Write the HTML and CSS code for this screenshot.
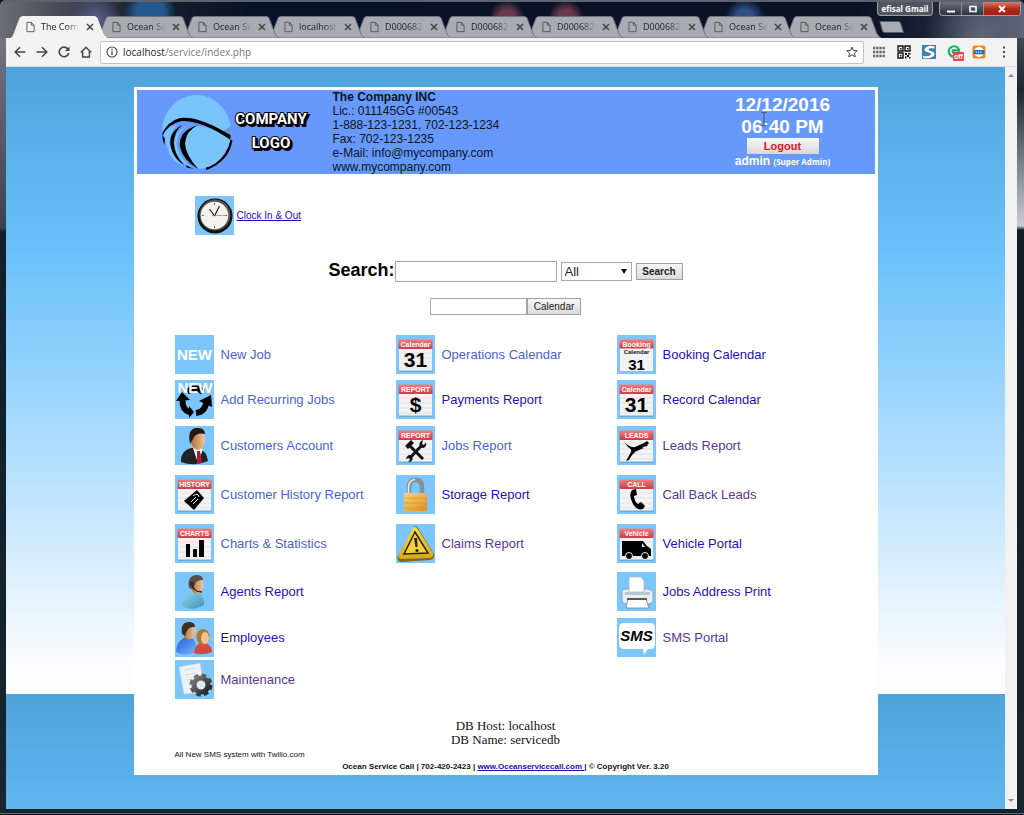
FILE: index.html
```html
<!DOCTYPE html>
<html lang="en">
<head>
<meta charset="utf-8">
<title>The Company</title>
<link rel="stylesheet" href="styles.css">
</head>
<body>
<svg class="defs" aria-hidden="true">
  <defs>
    <linearGradient id="red" x1="0" y1="0" x2="0" y2="1"><stop offset="0" stop-color="#f08080"/><stop offset="1" stop-color="#cf3a40"/></linearGradient>
    <linearGradient id="gold" x1="0" y1="0" x2="1" y2="1"><stop offset="0" stop-color="#ffd873"/><stop offset="1" stop-color="#e08a1c"/></linearGradient>
    <linearGradient id="yellow" x1="0" y1="0" x2="0" y2="1"><stop offset="0" stop-color="#f6dc4a"/><stop offset="1" stop-color="#dba812"/></linearGradient>
    <linearGradient id="skin" x1="0" y1="0" x2="1" y2="0"><stop offset="0" stop-color="#b06a35"/><stop offset="1" stop-color="#f2c79b"/></linearGradient>
    <linearGradient id="teal" x1="0" y1="0" x2="1" y2="1"><stop offset="0" stop-color="#8fd6e6"/><stop offset="1" stop-color="#3f93b8"/></linearGradient>
    <linearGradient id="blue" x1="0" y1="0" x2="1" y2="1"><stop offset="0" stop-color="#1e5fd0"/><stop offset="1" stop-color="#79b4ff"/></linearGradient>
    <linearGradient id="steel" x1="0" y1="0" x2="1" y2="1"><stop offset="0" stop-color="#7b7b7b"/><stop offset="1" stop-color="#222"/></linearGradient>
    <symbol id="tab-edge" viewBox="0 0 96 22"><path d="M0 22 Q2 21 3 18 L9 2 Q10 .5 12 .5 H83 Q85 .5 86 2 L92 18 Q94 21 96 22Z"/></symbol>
    <symbol id="doc" viewBox="0 0 10 12"><path d="M1 .8H6L9 4V11.2H1ZM6 .8V4H9" fill="none" stroke="#555" stroke-width="1"/></symbol>
    <symbol id="x" viewBox="0 0 8 8"><path d="M1 1L7 7M7 1L1 7" stroke="#444" stroke-width="1.500"/></symbol>
    <symbol id="sheet" viewBox="0 0 39 39"><path d="M3 36H36.500" stroke="#5a8fb5"/><rect x="3" y="10" width="33" height="25.500" fill="#f3f3f3"/><path d="M3 18H36M3 23H36M3 28H36M3 33H36" stroke="#e2e2e2"/><rect x="2.500" y="4.500" width="34" height="9.500" rx="1" fill="url(#red)"/></symbol>
  </defs>
</svg>
<div class="window">
  <header class="titlebar">
    <div class="tabs">
      <div class="tab tab-active"><svg class="shape"><use href="#tab-edge"/></svg><svg class="doc"><use href="#doc"/></svg><span>The Com</span><button aria-label="Close tab"><svg><use href="#x"/></svg></button></div>
      <div class="tab"><svg class="shape"><use href="#tab-edge"/></svg><svg class="doc"><use href="#doc"/></svg><span>Ocean Se</span><button aria-label="Close tab"><svg><use href="#x"/></svg></button></div>
      <div class="tab"><svg class="shape"><use href="#tab-edge"/></svg><svg class="doc"><use href="#doc"/></svg><span>Ocean Se</span><button aria-label="Close tab"><svg><use href="#x"/></svg></button></div>
      <div class="tab"><svg class="shape"><use href="#tab-edge"/></svg><svg class="doc"><use href="#doc"/></svg><span>localhost</span><button aria-label="Close tab"><svg><use href="#x"/></svg></button></div>
      <div class="tab"><svg class="shape"><use href="#tab-edge"/></svg><svg class="doc"><use href="#doc"/></svg><span>D000682</span><button aria-label="Close tab"><svg><use href="#x"/></svg></button></div>
      <div class="tab"><svg class="shape"><use href="#tab-edge"/></svg><svg class="doc"><use href="#doc"/></svg><span>D000682</span><button aria-label="Close tab"><svg><use href="#x"/></svg></button></div>
      <div class="tab"><svg class="shape"><use href="#tab-edge"/></svg><svg class="doc"><use href="#doc"/></svg><span>D000682</span><button aria-label="Close tab"><svg><use href="#x"/></svg></button></div>
      <div class="tab"><svg class="shape"><use href="#tab-edge"/></svg><svg class="doc"><use href="#doc"/></svg><span>D000682</span><button aria-label="Close tab"><svg><use href="#x"/></svg></button></div>
      <div class="tab"><svg class="shape"><use href="#tab-edge"/></svg><svg class="doc"><use href="#doc"/></svg><span>Ocean Se</span><button aria-label="Close tab"><svg><use href="#x"/></svg></button></div>
      <div class="tab"><svg class="shape"><use href="#tab-edge"/></svg><svg class="doc"><use href="#doc"/></svg><span>Ocean Se</span><button aria-label="Close tab"><svg><use href="#x"/></svg></button></div>
      <button class="new-tab" aria-label="New tab"><svg viewBox="0 0 25 12"><path d="M1 .5H19Q21 .5 21.500 2L24.500 11.500H6Q4 11.500 3.500 10Z" fill="#a9acb2" stroke="#555d6a"/></svg></button>
    </div>
    <div class="controls">
      <button class="user">efisal Gmail</button>
      <div class="winbtns">
        <button aria-label="Minimize"><svg viewBox="0 0 12 10"><path d="M2 6.500H10V8.500H2Z" fill="#fff"/></svg></button>
        <button aria-label="Maximize"><svg viewBox="0 0 12 10"><path d="M3 2.500H9V7.500H3Z" fill="none" stroke="#fff" stroke-width="1.600"/></svg></button>
        <button class="close" aria-label="Close"><svg viewBox="0 0 12 10"><path d="M3 2L9 8M9 2L3 8" stroke="#fff" stroke-width="2"/></svg></button>
      </div>
    </div>
  </header>

  <nav class="toolbar" aria-label="Browser">
    <button aria-label="Back"><svg viewBox="0 0 12 12"><path d="M11.500 6H1.500M6 1.200L1.200 6L6 10.800" fill="none" stroke="#444" stroke-width="1.500"/></svg></button>
    <button aria-label="Forward"><svg viewBox="0 0 12 12"><path d="M.5 6H10.500M6 1.200L10.800 6L6 10.800" fill="none" stroke="#444" stroke-width="1.500"/></svg></button>
    <button aria-label="Reload"><svg viewBox="0 0 12 12"><path d="M10 3.200A4.800 4.800 0 1 0 10.700 7" fill="none" stroke="#444" stroke-width="1.600"/><path d="M11.500 .6V5H7Z" fill="#444"/></svg></button>
    <button aria-label="Home"><svg viewBox="0 0 12 12"><path d="M.8 6.500L6 1.200L11.200 6.500M2.600 5.500V11H9.400V5.500" fill="none" stroke="#444" stroke-width="1.400"/></svg></button>
    <div class="omnibox">
      <svg viewBox="0 0 12 12"><circle cx="6" cy="6" r="5" fill="none" stroke="#444" stroke-width="1.100"/><path d="M6 5.200V9M6 2.800V4.200" stroke="#444" stroke-width="1.300"/></svg>
      <span class="url"><b>localhost</b>/service/index.php</span>
      <button aria-label="Bookmark"><svg viewBox="0 0 12 12"><path d="M6 1L7.400 4.500L11.200 4.700L8.300 7.200L9.300 10.900L6 8.800L2.700 10.900L3.700 7.200L.8 4.700L4.600 4.500Z" fill="none" stroke="#444"/></svg></button>
    </div>
    <div class="extensions">
      <button aria-label="Apps"><svg viewBox="0 0 14 14"><path d="M1 3H13M1 7H13M1 11H13" stroke="#666" stroke-width="2.400" stroke-dasharray="2.300 .9"/></svg></button>
      <button aria-label="QR code"><svg viewBox="0 0 14 14"><path d="M1 1H6V6H1ZM8 1H13V6H8ZM1 8H6V13H1Z" fill="none" stroke="#111" stroke-width="1.400"/><path d="M3 3H4.500V4.500H3ZM10 3H11.500V4.500H10ZM3 10H4.500V11.500H3ZM8 8H10V10H8ZM11 8H13.500V9.500H11ZM10 10H12V12H10ZM8 11.500H9.500V13.500H8ZM12 12H13.500V13.500H12Z" fill="#111"/></svg></button>
      <button aria-label="S extension"><svg viewBox="0 0 14 14"><rect width="14" height="14" fill="#3d84ad"/><path d="M12.500 1.500C7 0 2.500 2 2.500 5C2.500 7.500 9 7 9 9C9 11 4 11.500 1 11V13C7 14 12.500 12 12.500 9C12.500 6 6.500 6.200 6.500 4.500C6.500 3 9.500 3 12.500 3.500Z" fill="#fff"/></svg></button>
      <button class="badged" aria-label="Grammar"><svg viewBox="0 0 14 14"><circle cx="7" cy="6.500" r="6.300" fill="#1fb068"/><path d="M9.500 4.200A3.300 3.300 0 1 0 10.200 7.200H7.500" fill="none" stroke="#fff" stroke-width="1.500"/></svg><span>off</span></button>
      <button aria-label="Ring"><svg viewBox="0 0 14 14"><rect x=".5" y=".5" width="13" height="13" rx="2.500" fill="#f08a1d"/><circle cx="7" cy="7" r="5" fill="#fff"/><rect x="1.500" y="5" width="11" height="4.200" rx="1.500" fill="#1d6cb5"/><path d="M3.500 7.200H10.500" stroke="#cfe5f7" stroke-width="1.200" stroke-dasharray="1.500 .8"/></svg></button>
      <button aria-label="Menu"><svg viewBox="0 0 14 14"><path d="M6 1.500H8V3.500H6ZM6 6H8V8H6ZM6 10.500H8V12.500H6Z" fill="#444"/></svg></button>
    </div>
  </nav>

  <div class="viewport">
    <div class="page">
      <main class="card">
        <section class="banner">
          <svg class="logo" viewBox="0 0 152 80" role="img" aria-label="Company logo">
            <defs><clipPath id="disc"><ellipse cx="36.500" cy="40" rx="34.500" ry="37"/></clipPath></defs>
            <path d="M71 48Q68 68 46 76.500" fill="none" stroke="#000" stroke-width="3"/>
            <g clip-path="url(#disc)">
              <rect width="76" height="80" fill="#79c5fb"/>
              <path d="M0 42Q10 27 28 29Q48 30 72 44V80H0Z" fill="#6699fb"/>
              <path d="M36 34Q52 34 72 49V80H42Q24 62 25 50Q26 38 36 34Z" fill="#79c5fb"/>
              <path d="M4 41Q9 34 17 33Q8 43 11 56Q15 69 28 77Q8 72 4 41Z" fill="#79c5fb"/>
              <path d="M28 34Q15 41 17 55Q20 67 34 77H31Q15 66 14 52Q14 38 28 34Z" fill="#79c5fb"/>
              <path d="M22 33Q7 41 11 56Q14 67 24 73Q14 62 14 51Q14 40 22 33Z" fill="#000"/>
              <path d="M38 33Q18 39 20 55Q23 68 38 77Q25 62 25 51Q26 39 38 33Z" fill="#000"/>
              <path d="M26 73L34 77H27ZM2 43Q1 49 4 55L5 47Z" fill="#000"/>
              <path d="M2 42Q8 29 20 26Q38 23 72 44V49Q44 29 22 29Q9 31 2 44Z" fill="#000"/>
              <path d="M62 40L71 34V44Z" fill="#000" opacity=".2"/>
            </g>
            <g class="logo-shadow"><text x="113" y="34">COMPANY</text><text x="113" y="58">LOGO</text></g>
            <g class="logo-type"><text x="111" y="32">COMPANY</text><text x="111" y="56">LOGO</text></g>
          </svg>
          <address><b>The Company INC</b><br>Lic.: 011145GG #00543<br>1-888-123-1231, 702-123-1234<br>Fax: 702-123-1235<br>e-Mail: info@mycompany.com<br>www.mycompany.com</address>
          <div class="session">
            <div class="stamp">12/12/2016<br>06:40 PM</div>
            <svg class="cursor" viewBox="0 0 6 14"><path d="M.5 .5H2.500L3 1L3.500 .5H5.500M3 1V13M.5 13.500H2.500L3 13L3.500 13.500H5.500" fill="none" stroke="#456"/></svg>
            <button class="logout">Logout</button>
            <div class="who">admin <small>(Super Admin)</small></div>
          </div>
        </section>

        <div class="clock">
          <svg viewBox="0 0 39 39"><rect width="39" height="39" fill="#7cc6fb"/><circle cx="20" cy="20" r="17.500" fill="#111"/><circle cx="20" cy="19" r="15.500" fill="#555"/><circle cx="19.500" cy="19.500" r="13.800" fill="#f4f2ef"/><path d="M19.500 7V9M19.500 30V32M7 19.500H9M30 19.500H32" stroke="#666"/><path d="M19.500 20L14.500 13M19.500 20L24.500 10" stroke="#222" stroke-width="1.200"/><path d="M17 19.500H31" stroke="#c55" stroke-width=".6"/></svg>
          <a href="#">Clock In &amp; Out</a>
        </div>

        <form class="search">
          <label for="q">Search:</label><input id="q" type="text"><select aria-label="Search in"><option>All</option></select><button type="button">Search</button>
        </form>
        <form class="datepick">
          <input type="text" aria-label="Date"><button type="button">Calendar</button>
        </form>

        <nav class="menu" aria-label="Main">
          <ul>
            <li><a class="hot" href="#"><svg viewBox="0 0 39 39"><rect width="39" height="39" fill="#7cc6fb"/><text class="ic-new" x="19.500" y="25">NEW</text></svg>New Job</a></li>
            <li><a class="hot" href="#"><svg viewBox="0 0 39 39"><rect width="39" height="39" fill="#7cc6fb"/><path d="M7.500 20Q7 30 15 32.500M21 33Q31 32 31.500 20M12 12Q20 5 28 12" fill="none" stroke="#000" stroke-width="6"/><path d="M1 21L7 12L15 20ZM14 26L19 32L14 38ZM24 21L37 27L36 15Z"/><text class="ic-new" x="20" y="13">NEW</text></svg>Add Recurring Jobs</a></li>
            <li><a class="hot" href="#"><svg viewBox="0 0 39 39"><rect width="39" height="39" fill="#7cc6fb"/><path d="M6 36Q5 25 16 22H23Q32 25 33 35Q20 41 6 36Z" fill="#202226"/><path d="M18 22L23 37L28 23Z" fill="#fff"/><path d="M22 25L25 25L27 36L24 38L22 36Z" fill="#b3172b"/><ellipse cx="23" cy="14" rx="7" ry="10" fill="url(#skin)"/><path d="M15 18Q12 3 21 2Q30 1 30 8Q22 6 19 11Z" fill="#241812"/></svg>Customers Account</a></li>
            <li><a class="hot" href="#"><svg viewBox="0 0 39 39"><rect width="39" height="39" fill="#7cc6fb"/><use href="#sheet"/><text class="ic-cap" x="19.500" y="12">HISTORY</text><path d="M9 26L22 15L29 23L19 35Z"/><path d="M16 27L21 22M18 29L23 24M18 21Q23 17 24 22" stroke="#eee" fill="none"/></svg>Customer History Report</a></li>
            <li><a class="hot" href="#"><svg viewBox="0 0 39 39"><rect width="39" height="39" fill="#7cc6fb"/><use href="#sheet"/><text class="ic-cap" x="19.500" y="12">CHARTS</text><path d="M11 20H15V33H11ZM18 25H22V33H18ZM24 16H29V33H24Z"/></svg>Charts &amp; Statistics</a></li>
            <li><a class="cool" href="#"><svg viewBox="0 0 39 39"><rect width="39" height="39" fill="#7cc6fb"/><path d="M7 34Q6 25 16 21H23Q30 25 29 33Q17 40 7 34Z" fill="url(#teal)"/><ellipse cx="22" cy="13" rx="6.500" ry="9" fill="url(#skin)"/><path d="M14 16Q12 4 21 3Q28 3 28 8Q20 7 18 17Z" fill="#56514c"/><path d="M17 12Q18 20 27 20" fill="none" stroke="#222" stroke-width="1.500"/><circle cx="17" cy="12" r="2.500" fill="#333"/></svg>Agents Report</a></li>
            <li><a class="cool" href="#"><svg viewBox="0 0 39 39"><rect width="39" height="39" fill="#7cc6fb"/><path d="M1 34Q1 24 10 19H16Q22 24 22 34Q10 39 1 34Z" fill="url(#blue)"/><ellipse cx="14" cy="13" rx="6.500" ry="8.500" fill="url(#skin)"/><path d="M7 16Q5 4 14 4Q20 4 20 9Q12 8 10 18Z" fill="#3f3025"/><path d="M19 35Q20 27 25 25H31Q37 28 37 34Q28 38 19 35Z" fill="#d94545"/><ellipse cx="28" cy="19" rx="6.500" ry="8" fill="#b5772f"/><ellipse cx="30" cy="20" rx="4" ry="6" fill="#f0c391"/></svg>Employees</a></li>
            <li><a class="seen" href="#"><svg viewBox="0 0 39 39"><rect width="39" height="39" fill="#7cc6fb"/><path d="M4 7L25 3L30 32L9 34Z" fill="#eef3f8" stroke="#c5d3de" stroke-width=".6"/><path d="M9 10L20 8M10 15L21 13M11 20L18 19" stroke="#cbd5dd"/><circle cx="26" cy="25" r="9.500" fill="none" stroke="url(#steel)" stroke-width="4" stroke-dasharray="4.500 3"/><circle cx="26" cy="25" r="7" fill="#dfe9f2" stroke="url(#steel)" stroke-width="5"/></svg>Maintenance</a></li>
          </ul>
          <ul>
            <li><a class="hot" href="#"><svg viewBox="0 0 39 39"><rect width="39" height="39" fill="#7cc6fb"/><use href="#sheet"/><text class="ic-cap" x="19.500" y="11.500">Calendar</text><text class="ic-day" x="19.500" y="32">31</text></svg>Operations Calendar</a></li>
            <li><a class="cool" href="#"><svg viewBox="0 0 39 39"><rect width="39" height="39" fill="#7cc6fb"/><use href="#sheet"/><text class="ic-cap" x="19.500" y="12">REPORT</text><text class="ic-day" x="19.500" y="32">$</text></svg>Payments Report</a></li>
            <li><a class="hot" href="#"><svg viewBox="0 0 39 39"><rect width="39" height="39" fill="#7cc6fb"/><use href="#sheet"/><text class="ic-cap" x="19.500" y="12">REPORT</text><path d="M14 20L27 33M26 19L14 32" stroke="#111" stroke-width="3"/><path d="M9 20L15 14L18 17L12 23ZM24 20Q22 16 27 14L26 18L28 19L30 16Q31 22 26 22ZM16 30Q12 27 10 33L13 32L14 34L12 36Q18 36 16 30Z" fill="#111"/></svg>Jobs Report</a></li>
            <li><a class="cool" href="#"><svg viewBox="0 0 39 39"><rect width="39" height="39" fill="#7cc6fb"/><path d="M13 20V12Q13 5 19.500 5Q26 5 26 12V20" fill="none" stroke="#8a8f94" stroke-width="4.500"/><path d="M12.500 19V12Q13 5 19 4.500" fill="none" stroke="#e6eaec" stroke-width="1.500"/><rect x="8" y="18" width="23" height="18" rx="2" fill="url(#gold)"/><path d="M8 23H31M8 28H31M8 33H31" stroke="#d99331" stroke-width=".8"/></svg>Storage Report</a></li>
            <li><a class="seen" href="#"><svg viewBox="0 0 39 39"><rect width="39" height="39" fill="#7cc6fb"/><path d="M18 3Q20 1 22 4L38 30Q39 35 34 36L5 38Q0 37 2 32Z" fill="#7d6a20"/><path d="M17 4Q19 2 21 4L37 29Q38 33 34 34L5 35Q1 34 3 30Z" fill="url(#yellow)"/><path d="M19 8L32 29L8 30Z" fill="#f7cf3a" stroke="#222" stroke-width="1.500"/><path d="M18 14H21L21.500 23H19.500Z" fill="#222"/><circle cx="21" cy="26.500" r="1.500" fill="#222"/></svg>Claims Report</a></li>
          </ul>
          <ul>
            <li><a class="cool" href="#"><svg viewBox="0 0 39 39"><rect width="39" height="39" fill="#7cc6fb"/><rect x="3" y="10" width="33" height="26" fill="#f3f3f3"/><rect x="2.500" y="4.500" width="34" height="9" rx="1" fill="url(#red)"/><text class="ic-cap" x="19.500" y="11.500">Booking</text><text class="ic-cap ic-dark" x="19.500" y="19">Calendar</text><text class="ic-day ic-small" x="19.500" y="34.500">31</text></svg>Booking Calendar</a></li>
            <li><a class="cool" href="#"><svg viewBox="0 0 39 39"><rect width="39" height="39" fill="#7cc6fb"/><use href="#sheet"/><text class="ic-cap" x="19.500" y="11.500">Calendar</text><text class="ic-day" x="19.500" y="32">31</text></svg>Record Calendar</a></li>
            <li><a class="seen" href="#"><svg viewBox="0 0 39 39"><rect width="39" height="39" fill="#7cc6fb"/><use href="#sheet"/><text class="ic-cap" x="19.500" y="12">LEADS</text><path d="M7 16Q13 22 18 21L27 17L30 15L32 17L30 19L31 20L25 21L27 22L22 24Q18 25 15 29L12 34L9 35L14 26Q15 23 12 22Z"/></svg>Leads Report</a></li>
            <li><a class="seen" href="#"><svg viewBox="0 0 39 39"><rect width="39" height="39" fill="#7cc6fb"/><use href="#sheet"/><text class="ic-cap" x="19.500" y="12">CALL</text><path d="M15 15L19 14L20 20L17 21Q17 26 21 29L24 27L28 31L26 34Q20 36 16 29Q11 20 15 15Z"/></svg>Call Back Leads</a></li>
            <li><a class="cool" href="#"><svg viewBox="0 0 39 39"><rect width="39" height="39" fill="#7cc6fb"/><use href="#sheet"/><text class="ic-cap" x="19.500" y="12">Vehicle</text><path d="M5 17H26L30 22L34 25V32H5Z"/><path d="M25 19L28 23H25Z" fill="#eee"/><circle cx="12" cy="32" r="3.500" stroke="#eee"/><circle cx="28" cy="32" r="3.500" stroke="#eee"/></svg>Vehicle Portal</a></li>
            <li><a class="cool" href="#"><svg viewBox="0 0 39 39"><rect width="39" height="39" fill="#7cc6fb"/><path d="M5 20Q4 17 9 17H31Q35 17 36 21V29Q35 32 31 32H9Q5 32 5 28Z" fill="#e9eef4" stroke="#8fa3b5"/><path d="M12 20V5H24L27 9V20Z" fill="#fff" stroke="#a9bccb" stroke-width=".8"/><path d="M8 20H33V23H8Z" fill="#b9c6d2"/><path d="M11 27H29L32 36H9Z" fill="#fff" stroke="#6f8497" stroke-width=".8"/><path d="M10 27H30" stroke="#333" stroke-width="1.500"/></svg>Jobs Address Print</a></li>
            <li><a class="seen" href="#"><svg viewBox="0 0 39 39"><rect width="39" height="39" fill="#7cc6fb"/><path d="M7 5H33Q38 5 38 10V26Q38 31 33 31H31L27 37L26 31H7Q2 31 2 26V10Q2 5 7 5Z" fill="#fff"/><text class="ic-sms" x="19.500" y="23">SMS</text></svg>SMS Portal</a></li>
          </ul>
        </nav>

        <p class="db">DB Host: localhost<br>DB Name: servicedb</p>
        <p class="note">All New SMS system with Twilio.com</p>
        <footer>Ocean Service Call | 702-420-2423 | <a href="#">www.Oceanservicecall.com </a>| © Copyright Ver. 3.20</footer>
      </main>
    </div>
    <div class="scrollbar" aria-hidden="true">
      <svg viewBox="0 0 12 12"><path d="M3 8L6 5L9 8Z" fill="#888"/></svg>
      <svg viewBox="0 0 12 12"><path d="M3 4L6 7L9 4Z" fill="#888"/></svg>
    </div>
  </div>
</div>
</body>
</html>
```
FILE: styles.css
```css
* { box-sizing: border-box; }
body { margin: 0; font-family: "Liberation Sans", Arial, sans-serif; font-size: 12px; color: #111; background: #0a0f18; }
button { font-family: inherit; margin: 0; padding: 0; border: 0; background: none; color: inherit; }
svg { display: block; }
ul, p { margin: 0; padding: 0; list-style: none; }
.defs { position: absolute; width: 0; height: 0; }

.window {
  display: flex; flex-direction: column; min-height: 100vh;
  padding: 0 7px 6px 6px; border-radius: 6px 6px 0 0; overflow: hidden;
  box-shadow: inset 0 -1px #0b1218, inset 0 -2px #5f7078;
  background:
    linear-gradient(#7b808c 0, #3c424e 228px, #10202a 232px, #16262f) 0 0 / 6px 100% no-repeat,
    linear-gradient(#59616e 0, #1c2632 90px, #c9ced3 226px, #10202a 230px, #16262f) 100% 0 / 7px 100% no-repeat,
    #14232c;
}

.titlebar {
  display: flex; justify-content: space-between; align-items: flex-start; height: 38px; margin: 0 -7px 0 -6px;
  border-top: 2px solid #5d636e; padding: 0 3px 0 11px;
  background:
    radial-gradient(circle at 96px 18px, #5d6290 0, transparent 26px),
    radial-gradient(circle at 96% 90%, #5c6576 0, transparent 60px),
    radial-gradient(circle at 150px 10px, #22588b 0 14px, transparent 26px),
    radial-gradient(circle at 507px 16px, #6a3a4c 0 8px, transparent 18px),
    radial-gradient(circle at 566px 16px, #6a3a4c 0 8px, transparent 18px),
    radial-gradient(circle at 745px 16px, #31508a 0 8px, transparent 20px),
    linear-gradient(90deg, #6b6d75 0, #1c2333 130px, #081226 250px, #0a1226 84%, #1b2334 92%, #5d6676);
}
.tabs { display: flex; align-items: flex-end; height: 36px; min-width: 0; }
.tab { position: relative; display: flex; flex: none; align-items: center; width: 96px; height: 22px; margin-right: -10px; padding: 0 13px 0 15px; z-index: 1; }
.tab-active { z-index: 10; }
.tab:nth-child(2) { z-index: 9; }
.tab:nth-child(3) { z-index: 8; }
.tab:nth-child(4) { z-index: 7; }
.tab:nth-child(5) { z-index: 6; }
.tab:nth-child(6) { z-index: 5; }
.tab:nth-child(7) { z-index: 4; }
.tab:nth-child(8) { z-index: 3; }
.tab:nth-child(9) { z-index: 2; }
.shape { position: absolute; inset: 0; width: 100%; height: 100%; z-index: -1; fill: #a8abb1; stroke: #6c727d; stroke-width: 1px; }
.tab-active .shape { fill: #f2f2f2; stroke: #f2f2f2; }
.doc { width: 9px; height: 12px; flex: none; }
.tab span {
  flex: 1; margin-left: 6px; overflow: hidden; white-space: nowrap; font: 9px/12px "Open Sans", sans-serif; color: #222;
  -webkit-mask-image: linear-gradient(90deg, #000 65%, transparent); mask-image: linear-gradient(90deg, #000 65%, transparent);
}
.tab button { margin-left: 6px; }
.tab button svg { width: 8px; height: 8px; }
.new-tab { flex: none; margin: 0 0 5px 8px; }
.new-tab svg { width: 25px; height: 12px; }
.controls { display: flex; flex: none; gap: 6px; margin-left: -40px; }
.user { width: 56px; height: 14px; font: bold 8px/12px "Open Sans", sans-serif; color: #fff; background: #50555e; border: 1px solid #9aa0a8; border-top: 0; border-radius: 0 0 4px 4px; }
.winbtns { display: flex; height: 14px; border: 1px solid #9aa0a8; border-top: 0; border-radius: 0 0 4px 4px; overflow: hidden; background: linear-gradient(#6b727e, #2b3240); }
.winbtns button { width: 22px; border-right: 1px solid #8a909a; }
.winbtns svg { width: 12px; height: 10px; margin: auto; }
.winbtns .close { width: 36px; border: 0; background: linear-gradient(#d98070, #b52a1a 50%, #a02010); }

.toolbar { display: flex; align-items: center; height: 29px; padding: 0 6px 0 8px; background: #f2f2f2; border-bottom: 1px solid #d4dde4; }
.toolbar > button { width: 22px; flex: none; }
.toolbar > button svg { width: 12px; height: 12px; }
.omnibox { flex: 1; display: flex; align-items: center; height: 23px; margin: 0 8px 0 -2px; padding: 0 5px; background: #fff; border: 1px solid #c2c2c2; border-radius: 2px; }
.omnibox svg { width: 12px; height: 12px; }
.url { flex: 1; margin-left: 5px; font: 10px/16px "Open Sans", sans-serif; color: #777; }
.url b { font-weight: 400; color: #222; }
.extensions { display: flex; gap: 11px; }
.extensions svg { width: 14px; height: 14px; }
.badged { position: relative; }
.badged span { position: absolute; left: 6px; top: 7px; padding: 0 1px; font: bold 7px/9px "Liberation Sans", sans-serif; color: #fff; background: #e0474c; border-radius: 1px; }

.viewport { flex: 1; display: flex; }
.page { flex: 1; padding: 20px 20px 34px; background: linear-gradient(#4ea3da 0, #6bc2fb 190px, #fdfdff 600px, #fdfdff 627px) 0 0 / 100% 627px; }
.scrollbar { display: flex; flex-direction: column; justify-content: space-between; width: 12px; padding: 2px 0; background: #f1f1f1; }
.scrollbar svg { width: 12px; height: 12px; }

.card { max-width: 744px; margin: 0 auto; padding: 3px; background: #fff; }
.banner { display: flex; align-items: flex-start; min-height: 84px; background: #6699fb; }
.logo { width: 152px; height: 80px; margin: 2px 21px 0 23px; flex: none; }
.logo text { font: bold 15px Roboto, "Liberation Sans", sans-serif; text-anchor: middle; }
.logo-type { fill: #fff; stroke: #000; stroke-width: 2px; paint-order: stroke; }
.logo-shadow { fill: #000; stroke: #000; stroke-width: 2px; }
address { font: 12px/14px "Liberation Sans", sans-serif; color: #0c1420; }
.session { position: relative; width: 184px; margin-left: auto; padding-top: 4px; text-align: center; font-weight: bold; color: #fff; }
.stamp { font-size: 19px; line-height: 22px; }
.cursor { position: absolute; left: 70px; top: 22px; width: 6px; height: 14px; }
.logout { display: block; width: 72px; height: 16px; margin: 0 auto; font-size: 11px; font-weight: bold; line-height: 16px; color: #e01522; background: linear-gradient(#f8f8f8, #d8d8d8); }
.who { font-size: 12px; line-height: 14px; }
.who small { font: bold 8px "Open Sans", sans-serif; }

.clock { display: flex; align-items: center; gap: 3px; margin: 22px 58px 0; font-size: 10px; }
.clock svg { width: 39px; height: 39px; }
.clock a, footer a { color: #1a10b0; }

.search { display: flex; justify-content: center; align-items: center; margin-top: 26px; }
.search label { align-self: flex-start; font-size: 18px; font-weight: bold; line-height: 18px; color: #000; }
input { border: 1px solid #a9a9a9; background: #fff; padding: 0 2px; }
.search input { width: 162px; height: 21px; margin-right: 4px; }
select {
  appearance: none; width: 71px; height: 19px; margin-right: 4px; padding: 0 3px;
  font: 13px "Liberation Sans", sans-serif; color: #222; border: 1px solid #a9a9a9; border-radius: 0;
  background: #fff url("data:image/svg+xml,%3Csvg xmlns='http://www.w3.org/2000/svg' width='6' height='5'%3E%3Cpath d='M0 0H6L3 5Z' fill='%23111'/%3E%3C/svg%3E") right 4px center no-repeat;
}
.search button, .datepick button { height: 17px; border: 1px solid #a0a0a0; background: linear-gradient(#f6f6f6, #dcdcdc); font-size: 10px; color: #222; }
.search button { width: 47px; font-weight: bold; }
.datepick { display: flex; justify-content: center; margin-top: 16px; }
.datepick input { width: 97px; height: 17px; }
.datepick button { width: 54px; }

.menu { display: grid; grid-template-columns: repeat(3, 1fr); margin: 20px 37px 0 38px; }
.menu ul { display: grid; grid-template-rows: 45px 46px 49px 49px 48px 46px 42px 39px; }
.menu a { display: flex; align-items: center; gap: 7px; height: 39px; font-size: 13px; text-decoration: none; }
.menu svg { width: 39px; height: 39px; }
.hot { color: #4a63d2; }
.cool { color: #1f12ae; }
.seen { color: #5c3590; }
.menu text { font-family: "Liberation Sans", sans-serif; font-weight: bold; text-anchor: middle; }
.ic-new { font-size: 15px; fill: #fff; }
.ic-cap { font-size: 7px; fill: #fff; }
.ic-dark { fill: #111; font-size: 6px; }
.ic-day { font-size: 21px; fill: #000; }
.ic-small { font-size: 15px; }
.ic-sms { font-size: 15px; font-style: italic; fill: #000; }

.db { margin-top: 20px; font: 13px/14px "Liberation Serif", serif; text-align: center; }
.note { margin: 3px 38px 0; font-size: 8px; line-height: 10px; }
footer { margin-top: 2px; font-size: 8px; font-weight: bold; line-height: 10px; text-align: center; }
```
